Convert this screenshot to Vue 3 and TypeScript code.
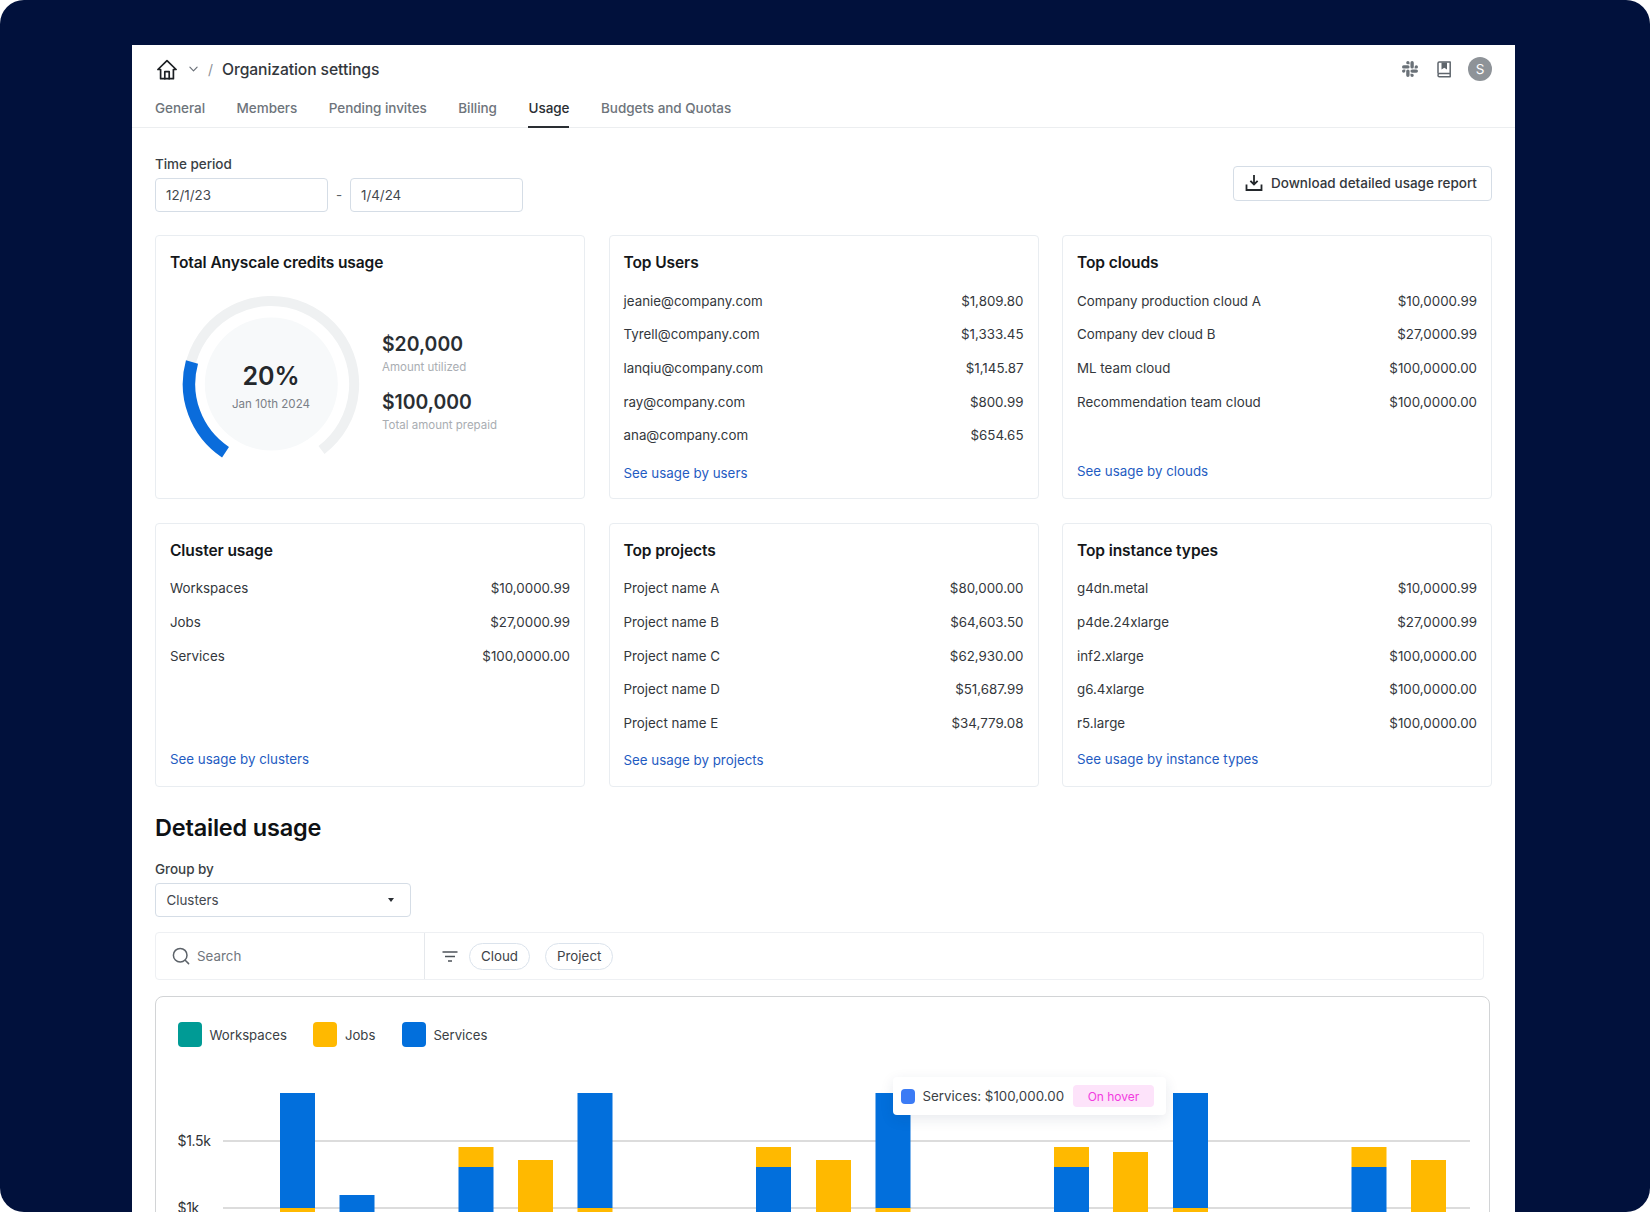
<script setup lang="ts">
interface Row { name: string; value: string }
interface Card { title: string; link: string; rows: Row[]; pinned?: boolean }
interface Segment { x: number; y: number; h: number; fill: string }

const tabs = ['General', 'Members', 'Pending invites', 'Billing', 'Usage', 'Budgets and Quotas']

const topCards: Card[] = [
  {
    title: 'Top Users', link: 'See usage by users',
    rows: [
      { name: 'jeanie@company.com', value: '$1,809.80' },
      { name: 'Tyrell@company.com', value: '$1,333.45' },
      { name: 'lanqiu@company.com', value: '$1,145.87' },
      { name: 'ray@company.com', value: '$800.99' },
      { name: 'ana@company.com', value: '$654.65' },
    ],
  },
  {
    title: 'Top clouds', link: 'See usage by clouds', pinned: true,
    rows: [
      { name: 'Company production cloud A', value: '$10,0000.99' },
      { name: 'Company dev cloud B', value: '$27,0000.99' },
      { name: 'ML team cloud', value: '$100,0000.00' },
      { name: 'Recommendation team cloud', value: '$100,0000.00' },
    ],
  },
]

const bottomCards: Card[] = [
  {
    title: 'Cluster usage', link: 'See usage by clusters', pinned: true,
    rows: [
      { name: 'Workspaces', value: '$10,0000.99' },
      { name: 'Jobs', value: '$27,0000.99' },
      { name: 'Services', value: '$100,0000.00' },
    ],
  },
  {
    title: 'Top projects', link: 'See usage by projects',
    rows: [
      { name: 'Project name A', value: '$80,000.00' },
      { name: 'Project name B', value: '$64,603.50' },
      { name: 'Project name C', value: '$62,930.00' },
      { name: 'Project name D', value: '$51,687.99' },
      { name: 'Project name E', value: '$34,779.08' },
    ],
  },
  {
    title: 'Top instance types', link: 'See usage by instance types', pinned: true,
    rows: [
      { name: 'g4dn.metal', value: '$10,0000.99' },
      { name: 'p4de.24xlarge', value: '$27,0000.99' },
      { name: 'inf2.xlarge', value: '$100,0000.00' },
      { name: 'g6.4xlarge', value: '$100,0000.00' },
      { name: 'r5.large', value: '$100,0000.00' },
    ],
  },
]

const BLUE = '#026fdc'
const YELLOW = '#ffb900'
const BOTTOM = 1260
const stacks: Array<[number, number, number]> = [
  [280, 1093, 1208],
  [339.5, 1195, BOTTOM],
  [458.5, 1167, BOTTOM],
  [518, BOTTOM, BOTTOM],
  [577.5, 1093, 1208],
  [756, 1167, BOTTOM],
  [816, BOTTOM, BOTTOM],
  [875.5, 1093, 1208],
  [1054, 1167, BOTTOM],
  [1113, BOTTOM, BOTTOM],
  [1173, 1093, 1208],
  [1351.5, 1167, BOTTOM],
  [1411, BOTTOM, BOTTOM],
]
const yellowTops: Record<number, number> = {
  458.5: 1147, 518: 1160, 756: 1147, 816: 1160, 1054: 1147, 1113: 1152, 1351.5: 1147, 1411: 1160,
}
const segments: Segment[] = stacks.flatMap(([x, top, mid]) => {
  const out: Segment[] = []
  if (mid > top) out.push({ x, y: top, h: mid - top, fill: BLUE })
  if (mid < BOTTOM) out.push({ x, y: mid, h: BOTTOM - mid, fill: YELLOW })
  const yt = yellowTops[x]
  if (yt) out.push({ x, y: yt, h: top - yt, fill: YELLOW })
  return out
})
</script>

<template>
  <div class="frame">
    <main class="panel">
      <header class="head">
        <div class="crumbs">
          <svg class="home" viewBox="0 0 20 20" width="20" height="21" fill="none" stroke="#1d2024" stroke-width="1.7" stroke-linejoin="round" stroke-linecap="round">
            <path d="M0.9 10 10 1.2 19.1 10H16.4V19.2H3.6V10Z" />
            <path d="M7.8 19.2V12.2H12.2V19.2" />
          </svg>
          <svg class="chev" viewBox="0 0 10 6" width="9" height="6" fill="none" stroke="#6a7078" stroke-width="1.3" stroke-linecap="round" stroke-linejoin="round">
            <path d="M1 1 5 5 9 1" />
          </svg>
          <span class="slash">/</span>
          <span class="crumb-title">Organization settings</span>
          <div class="head-actions">
            <svg class="slack" viewBox="0 0 24 24" width="16" height="16" fill="#6a7178">
              <path d="M5.042 15.165a2.528 2.528 0 0 1-2.52 2.523A2.528 2.528 0 0 1 0 15.165a2.527 2.527 0 0 1 2.522-2.52h2.52v2.52zM6.313 15.165a2.527 2.527 0 0 1 2.521-2.52 2.527 2.527 0 0 1 2.521 2.52v6.313A2.528 2.528 0 0 1 8.834 24a2.528 2.528 0 0 1-2.521-2.522v-6.313zM8.834 5.042a2.528 2.528 0 0 1-2.521-2.52A2.528 2.528 0 0 1 8.834 0a2.528 2.528 0 0 1 2.521 2.522v2.52H8.834zM8.834 6.313a2.528 2.528 0 0 1 2.521 2.521 2.528 2.528 0 0 1-2.521 2.521H2.522A2.528 2.528 0 0 1 0 8.834a2.528 2.528 0 0 1 2.522-2.521h6.312zM18.956 8.834a2.528 2.528 0 0 1 2.522-2.521A2.528 2.528 0 0 1 24 8.834a2.528 2.528 0 0 1-2.522 2.521h-2.522V8.834zM17.688 8.834a2.528 2.528 0 0 1-2.523 2.521 2.527 2.527 0 0 1-2.52-2.521V2.522A2.527 2.527 0 0 1 15.165 0a2.528 2.528 0 0 1 2.523 2.522v6.312zM15.165 18.956a2.528 2.528 0 0 1 2.523 2.522A2.528 2.528 0 0 1 15.165 24a2.527 2.527 0 0 1-2.52-2.522v-2.522h2.52zM15.165 17.688a2.527 2.527 0 0 1-2.52-2.523 2.526 2.526 0 0 1 2.52-2.52h6.313A2.527 2.527 0 0 1 24 15.165a2.528 2.528 0 0 1-2.522 2.523h-6.313z" />
            </svg>
            <svg class="book" viewBox="0 0 16 17" width="16" height="17" fill="none" stroke="#5f666d" stroke-width="1.5" stroke-linejoin="round">
              <path d="M2 12.4V2.2C2 1.5 2.5 1 3.2 1H14.2V15.8H3.4C2.6 15.8 2 15.2 2 14.2 2 13.1 2.6 12.6 3.4 12.6H14.2" />
              <path d="M5.5 1.4H11V8.6L8.25 6.8 5.5 8.6Z" fill="#5f666d" stroke="none" />
            </svg>
            <div class="avatar">S</div>
          </div>
        </div>
        <nav class="tabs">
          <span v-for="t in tabs" :key="t" class="tab" :class="{ active: t === 'Usage' }">{{ t }}</span>
        </nav>
      </header>

      <div class="content">
        <section class="toolbar">
          <div>
            <div class="label">Time period</div>
            <div class="dates">
              <div class="input">12/1/23</div>
              <span class="dash">-</span>
              <div class="input">1/4/24</div>
            </div>
          </div>
          <button class="download" type="button">
            <svg viewBox="0 0 18 18" width="18" height="18" fill="none" stroke="#23272b" stroke-width="1.8" stroke-linecap="square">
              <path d="M9 2V10M6 7.4 9 10.4 12 7.4" />
              <path d="M1.5 11.5V16H16.5V11.5" />
            </svg>
            Download detailed usage report
          </button>
        </section>

        <section class="cards">
          <article class="card">
            <h3 class="card-title">Total Anyscale credits usage</h3>
            <div class="gauge-row">
              <div class="gauge">
                <svg viewBox="0 0 180 180" width="180" height="180" fill="none">
                  <path d="M44 159A83 83 0 1 1 140.5 156" stroke="#eff1f2" stroke-width="10" />
                  <path d="M44.5 158.2A82 82 0 0 1 11 68" stroke="#0a6cdb" stroke-width="12.5" />
                  <circle cx="90.3" cy="90" r="66.5" fill="#f7f9fa" />
                </svg>
                <div class="gauge-text">
                  <div class="pct">20%</div>
                  <div class="pct-date">Jan 10th 2024</div>
                </div>
              </div>
              <div class="stats">
                <div>
                  <div class="stat-value">$20,000</div>
                  <div class="stat-label">Amount utilized</div>
                </div>
                <div>
                  <div class="stat-value">$100,000</div>
                  <div class="stat-label">Total amount prepaid</div>
                </div>
              </div>
            </div>
          </article>

          <article v-for="c in [...topCards, ...bottomCards]" :key="c.title" class="card">
            <h3 class="card-title">{{ c.title }}</h3>
            <ul class="rows">
              <li v-for="r in c.rows" :key="r.name" class="row">
                <span>{{ r.name }}</span><span>{{ r.value }}</span>
              </li>
            </ul>
            <a class="link" :class="{ pinned: c.pinned }">{{ c.link }}</a>
          </article>
        </section>

        <h2 class="section-title">Detailed usage</h2>
        <div class="label group-label">Group by</div>
        <div class="select">
          <span>Clusters</span>
          <span class="caret"></span>
        </div>

        <div class="filters">
          <div class="search">
            <svg viewBox="0 0 18 18" width="18" height="18" fill="none" stroke="#5c6269" stroke-width="1.5" stroke-linecap="round">
              <circle cx="8.2" cy="8.2" r="6.8" />
              <path d="M13.2 13.2 16.6 16.6" />
            </svg>
            <span>Search</span>
          </div>
          <div class="chips">
            <svg viewBox="0 0 16 11" width="16" height="11" fill="none" stroke="#4d5359" stroke-width="1.4">
              <path d="M0.5 1H15.5M3 5.5H13M6 10H10" />
            </svg>
            <span class="chip">Cloud</span>
            <span class="chip">Project</span>
          </div>
        </div>

        <section class="chart-card">
          <div class="legend">
            <span class="legend-item"><i class="swatch teal"></i>Workspaces</span>
            <span class="legend-item"><i class="swatch amber"></i>Jobs</span>
            <span class="legend-item"><i class="swatch azure"></i>Services</span>
          </div>
          <div class="chart">
            <svg viewBox="156 1048 1333 212" width="1333" height="212">
              <line x1="223" x2="1470" y1="1141" y2="1141" stroke="#dcdcdc" stroke-width="2" />
              <line x1="223" x2="1470" y1="1208" y2="1208" stroke="#dcdcdc" stroke-width="2" />
              <text x="177.5" y="1146" class="axis">$1.5k</text>
              <text x="177.5" y="1213" class="axis">$1k</text>
              <rect v-for="(s, i) in segments" :key="i" :x="s.x" :y="s.y" width="35" :height="s.h" :fill="s.fill" />
            </svg>
            <div class="tip">
              <i class="tip-dot"></i>
              <span class="tip-text">Services: $100,000.00</span>
              <span class="tip-badge">On hover</span>
            </div>
          </div>
        </section>
      </div>
    </main>
  </div>
</template>

<style>
html, body { margin: 0; background: #fff; }
</style>

<style scoped>
* { box-sizing: border-box; }
.frame {
  width: 1650px;
  height: 1212px;
  overflow: hidden;
  background: #01113c;
  border-radius: 24px;
  padding: 45px 135px 0 132px;
  font-family: Inter, "Liberation Sans", sans-serif;
  color: #2a2e33;
  font-size: 13.35px;
}
.panel { background: #fff; height: 1300px; }
.head { height: 83px; border-bottom: 1px solid #eceef0; padding: 0 23px; }
.crumbs { display: flex; align-items: center; height: 48px; }
.home { margin-left: 1.5px; }
.chev { margin-left: 12.5px; }
.slash { margin-left: 10px; color: #8b9097; font-size: 14px; }
.crumb-title { margin-left: 9px; font-size: 15.7px; font-weight: 500; color: #33373c; letter-spacing: -0.1px; }
.head-actions { margin-left: auto; display: flex; align-items: center; }
.book { margin-left: 18px; }
.avatar {
  margin-left: 16px; width: 24px; height: 24px; border-radius: 50%;
  background: #8e9398; color: #fff; font-size: 13.5px;
  display: flex; align-items: center; justify-content: center;
}
.tabs { display: flex; gap: 31.5px; height: 35px; }
.tab { height: 35px; padding-top: 7px; color: #6e747b; font-size: 13.5px; font-weight: 500; line-height: 17px; letter-spacing: -0.04px; }
.tab.active { color: #2a2e33; border-bottom: 2px solid #2a2e33; }
.content { padding: 0 23px; }
.toolbar { display: flex; justify-content: space-between; align-items: center; margin-top: 27px; }
.label { font-size: 13.5px; line-height: 18px; font-weight: 500; color: #3a3f45; letter-spacing: -0.05px; }
.dates { display: flex; align-items: center; margin-top: 5px; }
.input {
  width: 173px; height: 34px; border: 1px solid #d5dde6; border-radius: 4px;
  padding: 0 10px; display: flex; align-items: center; color: #43484e;
}
.dash { width: 22px; text-align: center; color: #5b6168; }
.download {
  display: flex; align-items: center; gap: 8px; width: 259.5px; height: 35px;
  background: #fff; border: 1px solid #d5dde6; border-radius: 4px; padding: 0 0 1px 11.5px;
  font: 500 13.5px Inter, "Liberation Sans", sans-serif; color: #33373c; white-space: nowrap;
}
.cards { display: grid; grid-template-columns: repeat(3, 430px); gap: 23.5px; margin-top: 23px; }
.card {
  height: 264px; border: 1px solid #e9edf1; border-radius: 4px;
  padding: 17px 14px 17px; display: flex; flex-direction: column;
}
.card-title { margin: 0; font-size: 15.55px; line-height: 20px; font-weight: 600; color: #14171a; letter-spacing: -0.1px; }
.gauge-row { display: flex; margin: 21px 0 0 11px; gap: 21px; }
.gauge { position: relative; width: 180px; height: 180px; }
.gauge-text { position: absolute; inset: 0; text-align: center; padding-top: 64px; }
.pct { font-size: 25px; line-height: 36px; font-weight: 600; color: #24282c; }
.pct-date { font-size: 11.6px; line-height: 18px; margin-top: 1px; color: #7b8087; }
.stats { margin-top: 36.5px; display: flex; flex-direction: column; gap: 12px; }
.stat-value { font-size: 19.4px; line-height: 26px; font-weight: 600; color: #2a2e33; }
.stat-label { font-size: 11.5px; line-height: 20px; color: #a9adb2; }
.rows { list-style: none; margin: 11px 0 0; padding: 0; }
.row { display: flex; justify-content: space-between; height: 33.67px; align-items: center; color: #33373c; }
.link { margin-top: 10.5px; line-height: 20px; color: #1f5cc2; font-weight: 400; }
.link.pinned { margin-top: auto; }
.section-title { margin: 26.5px 0 0; font-size: 23.5px; line-height: 30px; font-weight: 600; color: #0e1114; letter-spacing: -0.2px; }
.group-label { margin-top: 17px; }
.select {
  margin-top: 5px; width: 256px; height: 34px; border: 1px solid #d5dde6; border-radius: 4px;
  padding: 0 16px 0 10.5px; display: flex; align-items: center; justify-content: space-between; color: #43484e;
}
.caret { width: 0; height: 0; border: 3.5px solid transparent; border-top: 4px solid #2a2e33; border-bottom: 0; }
.filters {
  margin-top: 15px; width: 1329px; height: 48px; border: 1px solid #eef0f3; border-radius: 4px; display: flex;
}
.search { width: 269px; display: flex; align-items: center; gap: 7.5px; padding-left: 15.5px; border-right: 1px solid #e5e8ec; color: #71767d; }
.chips { display: flex; align-items: center; padding-left: 17px; gap: 11px; color: #3e4349; }
.chip {
  height: 27px; padding: 0 11px; border: 1px solid #dbe3ec; border-radius: 14px;
  display: flex; align-items: center;
}
.chip + .chip { margin-left: 4px; }
.chart-card {
  margin-top: 16px; width: 1335px; height: 260px; border: 1px solid #d2d4d6; border-radius: 8px;
}
.legend { display: flex; gap: 26.5px; padding: 25px 22px 0; height: 51px; color: #3a3f45; font-size: 13.2px; }
.legend-item { display: flex; align-items: center; gap: 7.5px; height: 25px; }
.swatch { width: 24px; height: 25px; border-radius: 4px; display: block; }
.teal { background: #009b95; }
.amber { background: #ffb900; }
.azure { background: #026fdc; }
.chart { position: relative; }
.chart svg { display: block; }
.axis { font: 14px Inter, "Liberation Sans", sans-serif; fill: #2f3337; letter-spacing: -0.3px; }
.tip {
  position: absolute; left: 737px; top: 29px; width: 273px; height: 38px;
  background: #fff; border-radius: 4px; box-shadow: 0 4px 14px rgba(30, 50, 90, 0.1);
  display: flex; align-items: center; padding-left: 7.5px;
}
.tip-dot { width: 14px; height: 15px; border-radius: 4px; background: #3b7bf5; display: block; }
.tip-text { margin-left: 8px; color: #3a3f45; white-space: nowrap; }
.tip-badge {
  position: absolute; left: 180px; top: 8px; width: 81px; height: 22px; border-radius: 4px;
  background: #fde3fa; color: #f23be0; font-size: 12px; display: flex; align-items: center; justify-content: center;
}
</style>
